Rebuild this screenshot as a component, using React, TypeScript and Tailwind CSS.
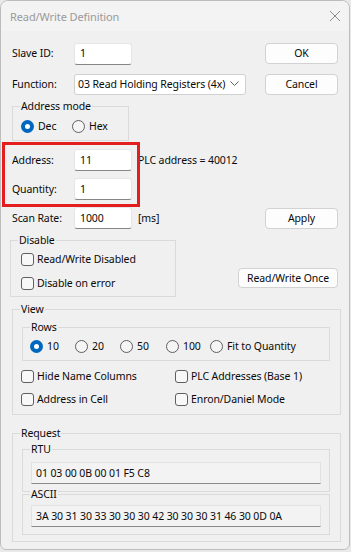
import React from "react";

const TextBox = ({ value, w }: { value: string; w: string }) => (
  <div
    className={`${w} h-[22px] bg-white border border-[#e6e6e6] border-b-[#868686] rounded-[3px] flex items-center pl-[5px]`}
  >
    {value}
  </div>
);

const Button = ({ label, w, h = "h-[21px]" }: { label: string; w: string; h?: string }) => (
  <div
    className={`${w} ${h} bg-[#fdfdfd] border border-[#d2d2d2] rounded-[4px] flex items-center justify-center`}
  >
    {label}
  </div>
);

const Radio = ({ checked, label, w }: { checked?: boolean; label: string; w: string }) => (
  <div className={`${w} flex items-center gap-[4px] whitespace-nowrap`}>
    {checked ? (
      <span className="w-[13px] h-[13px] shrink-0 rounded-full bg-[#0067c0] flex items-center justify-center">
        <span className="w-[5px] h-[5px] rounded-full bg-white" />
      </span>
    ) : (
      <span className="w-[13px] h-[13px] shrink-0 rounded-full border border-[#5f5f5f] bg-[#f5f5f5]" />
    )}
    <span>{label}</span>
  </div>
);

const Checkbox = ({ label }: { label: string }) => (
  <div className="flex items-center gap-[3px] whitespace-nowrap">
    <span className="w-[13px] h-[13px] shrink-0 rounded-[3px] border border-[#5f5f5f] bg-[#f8f8f8]" />
    <span>{label}</span>
  </div>
);

const GroupBox = ({
  label,
  className,
  children,
}: {
  label: string;
  className: string;
  children?: React.ReactNode;
}) => (
  <div className={`relative border border-[#dadada] ${className}`}>
    <span className="absolute -top-[8px] left-[7px] px-[1px] bg-[#f0f0f0] leading-[15px]">
      {label}
    </span>
    {children}
  </div>
);

const ReadOnlyField = ({ value }: { value: string }) => (
  <div className="w-[290px] h-[22px] ml-[8px] bg-[#f3f3f3] border border-[#e2e2e2] border-b-[#8a8a8a] flex items-center pl-[4px] whitespace-nowrap">
    {value}
  </div>
);

export default function App() {
  return (
    <div className="w-[351px] h-[552px] bg-[#e9e9e9] font-['Noto_Sans',sans-serif] text-[10.5px] tracking-[-0.1px] leading-[15px] text-[#0a0a0a]">
      <div className="relative w-[350px] h-[550px] bg-[#f0f0f0] border border-[#bdbdbd] rounded-t-[8px] rounded-b-[6px] overflow-hidden">
        {/* title bar */}
        <div className="h-[30px] bg-[#f3f3f3] flex items-center justify-between pl-[9px] pr-[7px]">
          <span className="text-[11px] text-[#9a9a9a]">Read/Write Definition</span>
          <svg width="12" height="12" viewBox="0 0 12 12" className="mr-[1px]">
            <path d="M1 1 L11 11 M11 1 L1 11" stroke="#8a8a8a" strokeWidth="1" />
          </svg>
        </div>

        <div className="flex flex-col pl-[11px] pr-[11px]">
          {/* slave id */}
          <div className="mt-[12px] h-[21px] flex items-center">
            <span className="w-[62px]">Slave ID:</span>
            <TextBox value="1" w="w-[58px]" />
            <div className="ml-auto">
              <Button label="OK" w="w-[73px]" />
            </div>
          </div>

          {/* function */}
          <div className="mt-[9px] h-[22px] flex items-center">
            <span className="w-[62px]">Function:</span>
            <div className="w-[172px] h-[21px] bg-white border border-[#d0d0d0] rounded-[3px] flex items-center pl-[3px] pr-[6px] whitespace-nowrap">
              <span className="flex-1">03 Read Holding Registers (4x)</span>
              <svg width="9" height="6" viewBox="0 0 9 6">
                <path d="M0.5 0.5 L4.5 4.5 L8.5 0.5" stroke="#606060" fill="none" strokeWidth="1" />
              </svg>
            </div>
            <div className="ml-auto">
              <Button label="Cancel" w="w-[73px]" />
            </div>
          </div>

          {/* address mode */}
          <GroupBox label="Address mode" className="mt-[11px] w-[117px] h-[35px]">
            <div className="flex items-center pl-[8px] pt-[12px]">
              <Radio checked label="Dec" w="w-[51px]" />
              <Radio label="Hex" w="w-[50px]" />
            </div>
          </GroupBox>

          {/* address */}
          <div className="mt-[8px] h-[22px] flex items-center">
            <span className="w-[62px]">Address:</span>
            <TextBox value="11" w="w-[58px]" />
            <span className="ml-[6px]">PLC address = 40012</span>
          </div>

          {/* quantity */}
          <div className="mt-[7px] h-[22px] flex items-center">
            <span className="w-[62px]">Quantity:</span>
            <TextBox value="1" w="w-[58px]" />
          </div>

          {/* scan rate */}
          <div className="mt-[7px] h-[22px] flex items-center">
            <span className="w-[62px]">Scan Rate:</span>
            <TextBox value="1000" w="w-[58px]" />
            <span className="ml-[6px]">[ms]</span>
            <div className="ml-auto self-end">
              <Button label="Apply" w="w-[73px]" />
            </div>
          </div>

          {/* disable */}
          <div className="mt-[11px] flex items-start">
            <GroupBox label="Disable" className="-ml-[2px] w-[166px] h-[57px]">
              <div className="flex flex-col gap-[9px] pl-[10px] pt-[11px]">
                <Checkbox label="Read/Write Disabled" />
                <Checkbox label="Disable on error" />
              </div>
            </GroupBox>
            <div className="ml-auto mt-[28px]">
              <Button label="Read/Write Once" w="w-[100px]" h="h-[20px]" />
            </div>
          </div>

          {/* view */}
          <GroupBox label="View" className="mt-[12px] w-[329px] h-[106px]">
            <div className="pl-[9px] pt-[17px]">
              <GroupBox label="Rows" className="w-[308px] h-[34px]">
                <div className="flex items-center pl-[7px] pt-[11px]">
                  <Radio checked label="10" w="w-[45px]" />
                  <Radio label="20" w="w-[45px]" />
                  <Radio label="50" w="w-[46px]" />
                  <Radio label="100" w="w-[44px]" />
                  <Radio label="Fit to Quantity" w="w-[100px]" />
                </div>
              </GroupBox>
            </div>
            <div className="grid grid-cols-[154px_150px] gap-y-[8px] pl-[8px] pt-[8px]">
              <Checkbox label="Hide Name Columns" />
              <Checkbox label="PLC Addresses (Base 1)" />
              <Checkbox label="Address in Cell" />
              <Checkbox label="Enron/Daniel Mode" />
            </div>
          </GroupBox>

          {/* request */}
          <GroupBox label="Request" className="mt-[18px] w-[329px] h-[109px]">
            <div className="pl-[9px] pt-[15px] flex flex-col gap-[2px]">
              <GroupBox label="RTU" className="w-[308px] h-[43px]">
                <div className="pt-[12px]">
                  <ReadOnlyField value="01 03 00 0B 00 01 F5 C8" />
                </div>
              </GroupBox>
              <GroupBox label="ASCII" className="w-[308px] h-[41px]">
                <div className="pt-[10px]">
                  <ReadOnlyField value="3A 30 31 30 33 30 30 30 42 30 30 30 31 46 30 0D 0A" />
                </div>
              </GroupBox>
            </div>
          </GroupBox>
        </div>

        {/* annotation */}
        <div className="absolute left-[1px] top-[141px] w-[138px] h-[65px] border-[3px] border-[#e41e1e]" />
      </div>
    </div>
  );
}
